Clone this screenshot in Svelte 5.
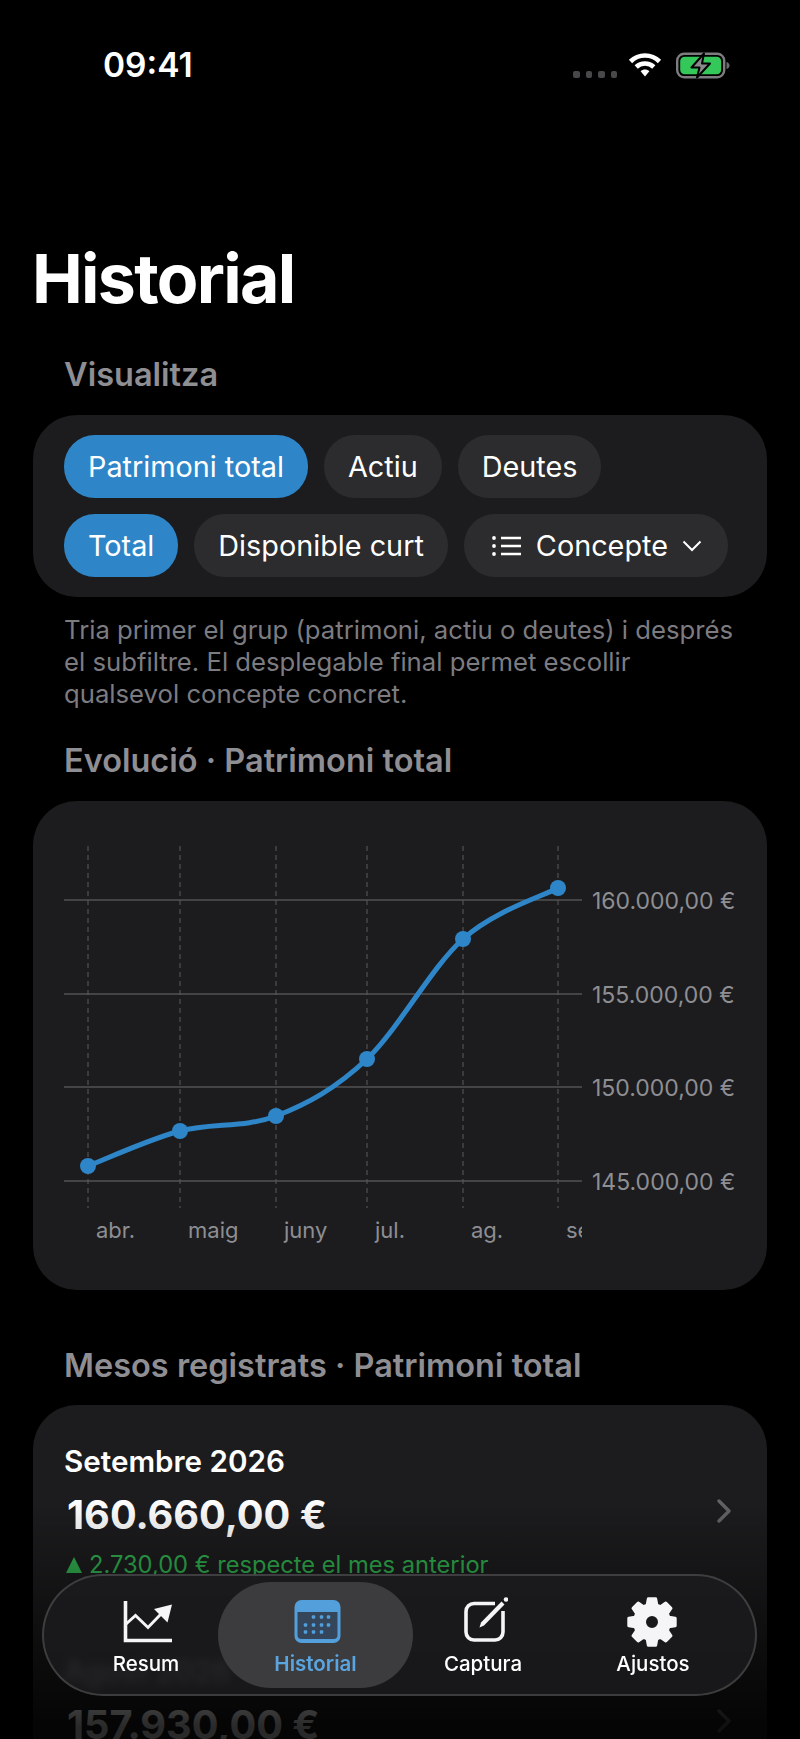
<script>
  const points = [
    { x: 88, y: 1166, label: "abr." },
    { x: 180, y: 1131, label: "maig" },
    { x: 276, y: 1116, label: "juny" },
    { x: 367, y: 1059, label: "jul." },
    { x: 463, y: 939, label: "ag." },
    { x: 558, y: 888, label: "set." }
  ];
  const ticks = [
    { y: 900, label: "160.000,00 €" },
    { y: 994, label: "155.000,00 €" },
    { y: 1087, label: "150.000,00 €" },
    { y: 1181, label: "145.000,00 €" }
  ];

  // catmull-rom through the points
  function curve(p) {
    let d = `M${p[0].x} ${p[0].y}`;
    for (let i = 0; i < p.length - 1; i++) {
      const a = p[i - 1] || p[i];
      const b = p[i];
      const c = p[i + 1];
      const e = p[i + 2] || c;
      d += ` C${b.x + (c.x - a.x) / 6} ${b.y + (c.y - a.y) / 6} ${c.x - (e.x - b.x) / 6} ${c.y - (e.y - b.y) / 6} ${c.x} ${c.y}`;
    }
    return d;
  }

  function gear(cx, cy, teeth, outer, inner) {
    const step = (Math.PI * 2) / teeth;
    const pts = [];
    for (let i = 0; i < teeth; i++) {
      const t = i * step - Math.PI / 2;
      const at = (r, a) => `${(cx + r * Math.cos(a)).toFixed(2)} ${(cy + r * Math.sin(a)).toFixed(2)}`;
      pts.push(at(inner, t - step * 0.36), at(outer, t - step * 0.2), at(outer, t + step * 0.2), at(inner, t + step * 0.36));
    }
    return "M" + pts.join(" L") + " Z";
  }

  const rows = [
    { month: "Setembre 2026", amount: "160.660,00 €", delta: "2.730,00 € respecte el mes anterior" },
    { month: "Agost 2026", amount: "157.930,00 €", delta: "6.420,00 € respecte el mes anterior" }
  ];
  const calDots = [
    [313, 1617], [321, 1617], [328, 1617],
    [305, 1625], [313, 1625], [321, 1625], [328, 1625],
    [305, 1632], [313, 1632], [321, 1632]
  ];
</script>

<div class="page">
  <div class="status">
    <span class="time">09:41</span>
    <div class="status-icons">
      <div class="signal"><i></i><i></i><i></i><i></i></div>
      <svg class="wifi" viewBox="0 0 34 25" aria-hidden="true">
        <path d="M2.5 9.5C10.5 1.5 23.5 1.5 31.5 9.5" />
        <path d="M8.2 15C13 10.4 21 10.4 25.8 15" />
        <path class="wedge" d="M12.6 19.2C15 17 19 17 21.4 19.2L17 24.5Z" />
      </svg>
      <svg class="battery" viewBox="0 0 55 27" aria-hidden="true">
        <rect class="shell" x="1.2" y="1.7" width="47" height="23.6" rx="7" />
        <rect class="charge" x="4.2" y="4.7" width="41" height="17.6" rx="4.5" />
        <path class="tip" d="M50.5 10c2 .5 3 2 3 3.5s-1 3-3 3.5Z" />
        <path class="bolt" d="M28 1.5 15.5 15.5h8L21 25.5 34 11.5h-8Z" />
      </svg>
    </div>
  </div>

  <h1>Historial</h1>

  <h2>Visualitza</h2>
  <div class="card filters">
    <div class="pill-row">
      <span class="pill on">Patrimoni total</span>
      <span class="pill">Actiu</span>
      <span class="pill">Deutes</span>
    </div>
    <div class="pill-row">
      <span class="pill on">Total</span>
      <span class="pill">Disponible curt</span>
      <span class="pill menu">
        <svg class="list" viewBox="0 0 30 22" aria-hidden="true">
          <circle cx="2" cy="3" r="1.9" /><circle cx="2" cy="11" r="1.9" /><circle cx="2" cy="19" r="1.9" />
          <path d="M9 3H29M9 11H29M9 19H29" />
        </svg>
        Concepte
        <svg class="caret" viewBox="0 0 20 12" aria-hidden="true"><path d="M1.5 1.5 10 10l8.5-8.5" /></svg>
      </span>
    </div>
  </div>
  <p class="help">Tria primer el grup (patrimoni, actiu o deutes) i després el subfiltre. El desplegable final permet escollir qualsevol concepte concret.</p>

  <h2 class="evol">Evolució · Patrimoni total</h2>
  <div class="card chart">
    <svg viewBox="33 801 734 489" width="734" height="489" aria-hidden="true">
      <defs>
        <clipPath id="plot"><rect x="33" y="801" width="549" height="489" /></clipPath>
      </defs>
      {#each ticks as t}
        <line class="hline" x1="64" x2="582" y1={t.y} y2={t.y} />
        <text class="tick" x="592" y={t.y + 9}>{t.label}</text>
      {/each}
      {#each points as p}
        <line class="vline" x1={p.x} x2={p.x} y1="846" y2="1208" />
      {/each}
      <g clip-path="url(#plot)">
        {#each points as p}
          <text class="tick small" x={p.x + 8} y="1238">{p.label}</text>
        {/each}
      </g>
      <path class="line" d={curve(points)} />
      {#each points as p}
        <circle class="dot" cx={p.x} cy={p.y} r="8" />
      {/each}
    </svg>
  </div>

  <h2 class="mesos">Mesos registrats · Patrimoni total</h2>
  <div class="card months">
    {#each rows as r}
      <div class="month">
        <div class="month-text">
          <div class="name">{r.month}</div>
          <div class="amount">{r.amount}</div>
          <div class="delta"><span class="up"></span>{r.delta}</div>
        </div>
        <svg class="chev" viewBox="0 0 14 24" aria-hidden="true"><path d="M2 2l10 10L2 22" /></svg>
      </div>
    {/each}
  </div>

  <div class="fade"></div>

  <nav class="tabbar">
    <div class="tab t1">
      <svg viewBox="118 1596 56 50" aria-hidden="true">
        <path class="stroke" d="M125.5 1601V1640.5H172" />
        <path class="stroke thin" d="M126 1624L135.5 1615.5L148 1627.5L161 1614" />
        <path class="fill" d="M172 1604.5L154 1609L167.5 1622.5Z" />
      </svg>
      <span>Resum</span>
    </div>
    <div class="tab t2 active">
      <svg viewBox="290.5 1596 50 50" aria-hidden="true">
        <rect class="cal" x="294" y="1600" width="46" height="43" rx="7" />
        <path class="cal-in" d="M297 1612H337V1635a4 4 0 0 1-4 4H301a4 4 0 0 1-4-4Z" />
        {#each calDots as d}
          <rect class="cal" x={d[0] - 1.7} y={d[1] - 1.7} width="3.4" height="3.4" rx="1" />
        {/each}
      </svg>
      <span>Historial</span>
    </div>
    <div class="tab t3">
      <svg viewBox="458 1596 50 50" aria-hidden="true">
        <path class="stroke" d="M495 1603.5H474a8 8 0 0 0-8 8V1632a8 8 0 0 0 8 8H495a8 8 0 0 0 8-8V1611" />
        <path class="fill" d="M501.5 1601.5L504.5 1604.5L484 1625.5L479.5 1627.5L481 1622.5Z" />
        <circle class="fill" cx="506" cy="1599.5" r="2.3" />
      </svg>
      <span>Captura</span>
    </div>
    <div class="tab t4">
      <svg viewBox="627 1596 52 52" aria-hidden="true">
        <path class="fill gear" fill-rule="evenodd" d={gear(652, 1622, 8, 23.5, 17.5) + " M659.5 1622a7.5 7.5 0 1 0-15 0a7.5 7.5 0 1 0 15 0Z"} />
      </svg>
      <span>Ajustos</span>
    </div>
  </nav>
</div>

<style>
  :global(body) {
    margin: 0;
    background: #000;
  }
  .page {
    position: relative;
    width: 800px;
    height: 1739px;
    overflow: hidden;
    background: #000;
    color: #fff;
    font-family: Inter, "Liberation Sans", sans-serif;
  }
  .status {
    height: 130px;
    display: flex;
    justify-content: space-between;
    align-items: flex-start;
    padding: 0 69px 0 103px;
    box-sizing: border-box;
  }
  .time {
    margin-top: 46px;
    font-size: 33.5px;
    line-height: 38px;
    font-weight: 600;
  }
  .status-icons {
    display: flex;
    align-items: flex-start;
    margin-top: 52px;
  }
  .signal {
    display: flex;
    gap: 6px;
    margin: 19px 11px 0 0;
  }
  .signal i {
    width: 6.5px;
    height: 6.5px;
    border-radius: 2px;
    background: #48484a;
  }
  .wifi {
    width: 34px;
    height: 25px;
  }
  .wifi path {
    fill: none;
    stroke: #fff;
    stroke-width: 4.6;
  }
  .wifi .wedge {
    fill: #fff;
    stroke: none;
  }
  .battery {
    width: 55px;
    height: 27px;
    margin-left: 14px;
  }
  .shell {
    fill: none;
    stroke: #7d7d80;
    stroke-width: 2.4;
  }
  .charge {
    fill: #34c759;
  }
  .tip {
    fill: #6d6d70;
  }
  .bolt {
    fill: #8a8a8d;
    stroke: #000;
    stroke-width: 2;
    stroke-linejoin: round;
  }
  h1 {
    margin: 108px 0 0 32px;
    font-size: 68px;
    line-height: 80px;
    font-weight: 700;
    letter-spacing: -1.7px;
  }
  h2 {
    margin: 37px 0 0 64px;
    font-size: 32.5px;
    line-height: 40px;
    font-weight: 600;
    color: #8e8e93;
  }
  h2.evol {
    margin-top: 31px;
  }
  h2.mesos {
    margin-top: 56px;
  }
  .card {
    margin: 20px 33px 0;
    border-radius: 44px;
    background: #1c1c1e;
  }
  .filters {
    height: 182px;
    box-sizing: border-box;
    padding: 20px 31px;
    display: flex;
    flex-direction: column;
    gap: 16px;
  }
  .pill-row {
    display: flex;
    gap: 16px;
  }
  .pill {
    height: 63px;
    padding: 0 24px;
    display: flex;
    align-items: center;
    border-radius: 31px;
    background: #2c2c2e;
    font-size: 28.8px;
  }
  .pill.on {
    background: #2e86c8;
  }
  .pill.menu {
    padding: 0 26px 0 28px;
    gap: 14px;
  }
  .list {
    width: 30px;
    height: 22px;
  }
  .list circle {
    fill: #fff;
  }
  .list path {
    fill: none;
    stroke: #fff;
    stroke-width: 2.4;
  }
  .caret {
    width: 20px;
    height: 12px;
  }
  .caret path {
    fill: none;
    stroke: #fff;
    stroke-width: 2;
  }
  .help {
    margin: 17px 60px 0 64px;
    font-size: 25.7px;
    line-height: 32px;
    color: #7c7c80;
  }
  .chart {
    height: 489px;
    overflow: hidden;
  }
  .chart svg {
    display: block;
  }
  .hline {
    stroke: #444446;
    stroke-width: 2;
  }
  .vline {
    stroke: #5a5a5d;
    stroke-width: 1;
    stroke-dasharray: 5 4;
  }
  .tick {
    fill: #8e8e93;
    font-size: 23px;
  }
  .tick.small {
    font-size: 22px;
  }
  .line {
    fill: none;
    stroke: #2e86c8;
    stroke-width: 5;
    stroke-linecap: round;
  }
  .dot {
    fill: #2e86c8;
  }
  .months {
    margin-top: 19px;
    padding: 0 36px 0 31px;
  }
  .month {
    height: 210px;
    box-sizing: border-box;
    padding-top: 38px;
    display: flex;
    align-items: flex-start;
    justify-content: space-between;
  }
  .chev {
    width: 14px;
    height: 24px;
    margin-top: 56px;
  }
  .chev path {
    fill: none;
    stroke: #636366;
    stroke-width: 3.4;
    stroke-linecap: round;
    stroke-linejoin: round;
  }
  .name {
    font-size: 29.6px;
    line-height: 36px;
    font-weight: 600;
  }
  .amount {
    margin-top: 11px;
    margin-left: 3px;
    font-size: 39.7px;
    line-height: 50px;
    font-weight: 700;
  }
  .delta {
    margin-top: 8px;
    margin-left: 2px;
    font-size: 23.7px;
    line-height: 34px;
    color: #30b14f;
    display: flex;
    align-items: center;
    gap: 7px;
  }
  .up {
    width: 0;
    height: 0;
    border-left: 8px solid transparent;
    border-right: 8px solid transparent;
    border-bottom: 16px solid #30b14f;
  }
  .fade {
    position: absolute;
    left: 0;
    right: 0;
    top: 1500px;
    bottom: 0;
    background: linear-gradient(rgba(0, 0, 0, 0), rgba(0, 0, 0, 0.25) 30%, rgba(0, 0, 0, 0.84) 95%);
  }
  .tabbar {
    position: absolute;
    left: 42px;
    top: 1574px;
    width: 715px;
    height: 122px;
    box-sizing: border-box;
    padding-left: 30px;
    display: flex;
    border: 2px solid rgba(255, 255, 255, 0.16);
    border-radius: 61px;
    background: rgba(28, 28, 30, 0.84);
    backdrop-filter: blur(4px);
  }
  .tab {
    flex: none;
    margin-top: 6px;
    height: 106px;
    display: flex;
    flex-direction: column;
    align-items: center;
    font-size: 20.5px;
    line-height: 26px;
    font-weight: 500;
  }
  .tab svg {
    margin-top: 14px;
    height: 50px;
    width: 50px;
  }
  .tab span {
    margin-top: 5px;
  }
  .t1 {
    width: 144px;
  }
  .t1 svg {
    width: 56px;
  }
  .t2 {
    width: 195px;
    border-radius: 53px;
    background: #3c3c3e;
    color: #5aa5e0;
    font-weight: 600;
  }
  .t3 {
    width: 140px;
  }
  .t4 {
    width: 200px;
  }
  .t4 svg {
    width: 52px;
    height: 52px;
    margin-bottom: -2px;
  }
  .stroke {
    fill: none;
    stroke: #f5f5f7;
    stroke-width: 3.6;
  }
  .stroke.thin {
    stroke-width: 3;
  }
  .fill {
    fill: #f5f5f7;
  }
  .gear {
    stroke: #f5f5f7;
    stroke-width: 3;
    stroke-linejoin: round;
  }
  .cal {
    fill: #529fdc;
  }
  .cal-in {
    fill: #36465a;
  }
</style>
